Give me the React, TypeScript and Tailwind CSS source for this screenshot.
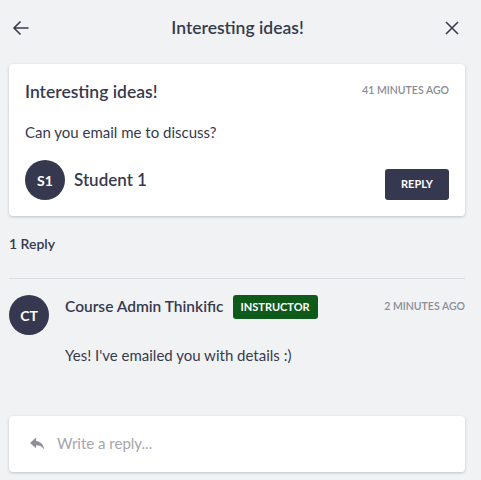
import React from "react";

const ArrowLeft = () => (
  <svg width="18" height="18" viewBox="0 0 18 18" fill="none" stroke="#3a3d4f" strokeWidth="1.6">
    <path d="M16.5 9H2M8.5 2.5L2 9l6.5 6.5" />
  </svg>
);

const CloseIcon = () => (
  <svg width="14" height="14" viewBox="0 0 14 14" fill="none" stroke="#3a3d4f" strokeWidth="1.6">
    <path d="M1 1l12 12M13 1L1 13" />
  </svg>
);

const ReplyIcon = () => (
  <svg width="15" height="14" viewBox="0 0 16 14" fill="#8e8f98">
    <path d="M6.5 0L0 5.8l6.5 5.8V8.2c4 0 6.8 1.3 8.8 4.8-.8-5-3.6-8.6-8.8-9.3V0z" />
  </svg>
);

const Avatar = ({ initials }: { initials: string }) => (
  <div className="flex h-10 w-10 shrink-0 items-center justify-center rounded-full bg-[#363850] text-[14px] font-bold text-white">
    {initials}
  </div>
);

const App = () => {
  return (
    <div
      className="min-h-[480px] w-[481px] bg-[#f1f2f4] pl-[9px] pr-[16px] text-[#373a4d]"
      style={{ fontFamily: "Lato, 'Liberation Sans', sans-serif" }}
    >
      {/* header */}
      <div className="flex h-[56px] items-center justify-between pl-[3px] pr-[6px]">
        <ArrowLeft />
        <h1 className="text-[17.5px] font-semibold">Interesting ideas!</h1>
        <CloseIcon />
      </div>

      {/* question card */}
      <div className="mt-[8px] rounded-[4px] bg-white px-4 pb-4 pt-[16px] shadow-[0_1px_3px_rgba(0,0,0,0.2)]">
        <div className="flex items-start justify-between">
          <h2 className="text-[17.5px] font-semibold leading-[24px]">Interesting ideas!</h2>
          <span className="mt-[3px] text-[10.5px] font-semibold uppercase text-[#8a8c95]">
            41 Minutes ago
          </span>
        </div>
        <p className="mt-[18px] text-[15px] leading-[20px]">Can you email me to discuss?</p>
        <div className="mt-[18px] flex items-end justify-between">
          <div className="flex items-center gap-[9px]">
            <Avatar initials="S1" />
            <span className="text-[17px] font-semibold">Student 1</span>
          </div>
          <button className="h-[31px] w-[64px] rounded-[3px] bg-[#363850] text-[11px] font-bold text-white">
            REPLY
          </button>
        </div>
      </div>

      <div className="mt-[17px] text-[14px] font-semibold">1 Reply</div>
      <div className="mt-[24px] h-px bg-[#dcdde0]" />

      {/* reply */}
      <div className="mt-[16px] flex gap-4">
        <Avatar initials="CT" />
        <div className="flex-1">
          <div className="flex items-center justify-between">
            <div className="flex items-center gap-[9px]">
              <span className="text-[15.5px] font-semibold">Course Admin Thinkific</span>
              <span className="rounded-[3px] bg-[#0e5a1a] px-[8px] py-[4px] text-[11px] font-bold leading-[16px] text-white">
                INSTRUCTOR
              </span>
            </div>
            <span className="text-[10.5px] font-semibold uppercase text-[#8a8c95]">2 Minutes ago</span>
          </div>
          <p className="mt-[25px] text-[15px]">Yes! I've emailed you with details :)</p>
        </div>
      </div>

      {/* reply input */}
      <div className="mt-[49px] flex h-[56px] items-center gap-[12px] rounded-[4px] bg-white pl-[21px] shadow-[0_1px_3px_rgba(0,0,0,0.2)]">
        <ReplyIcon />
        <span className="text-[15px] text-[#a5a6ad]">Write a reply...</span>
      </div>
    </div>
  );
};

export default App;
